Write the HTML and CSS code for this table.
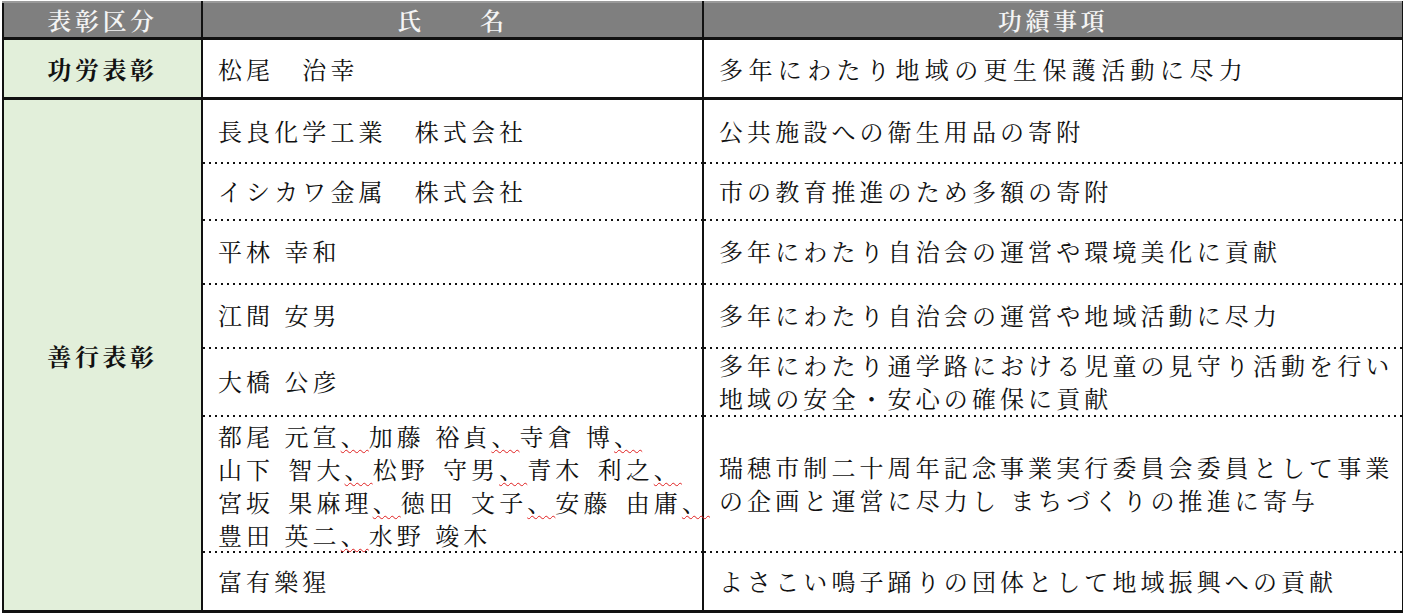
FILE: index.html
```html
<!DOCTYPE html>
<html lang="ja">
<head>
<meta charset="utf-8">
<title>表彰一覧</title>
<link rel="stylesheet" href="styles.css">
</head>
<body>
<div class="wrap">
<table class="awards">
  <colgroup>
    <col class="c-kind">
    <col class="c-name">
    <col class="c-deed">
  </colgroup>
  <thead>
    <tr class="head">
      <th>表彰区分</th>
      <th>氏　　名</th>
      <th>功績事項</th>
    </tr>
  </thead>
  <tbody class="grp">
    <tr class="r-a">
      <td class="kind">功労表彰</td>
      <td class="name">松尾　治幸</td>
      <td class="deed loose">多年にわたり地域の更生保護活動に尽力</td>
    </tr>
  </tbody>
  <tbody class="grp">
    <tr class="r-b">
      <td class="kind" rowspan="7">善行表彰</td>
      <td class="name">長良化学工業　株式会社</td>
      <td class="deed">公共施設への衛生用品の寄附</td>
    </tr>
    <tr class="r-c dot">
      <td class="name">イシカワ金属　株式会社</td>
      <td class="deed">市の教育推進のため多額の寄附</td>
    </tr>
    <tr class="r-d dot">
      <td class="name">平林 幸和</td>
      <td class="deed">多年にわたり自治会の運営や環境美化に貢献</td>
    </tr>
    <tr class="r-d dot">
      <td class="name">江間 安男</td>
      <td class="deed">多年にわたり自治会の運営や地域活動に尽力</td>
    </tr>
    <tr class="r-e dot">
      <td class="name">大橋 公彦</td>
      <td class="deed">多年にわたり通学路における児童の見守り活動を行い<br>地域の安全・安心の確保に貢献</td>
    </tr>
    <tr class="r-f dot">
      <td class="name multi">都尾 元宣<span class="sp">、</span>加藤 裕貞<span class="sp">、</span>寺倉 博<span class="sp">、</span><br>山下<span class="gap">　</span>智大<span class="sp">、</span>松野<span class="gap">　</span>守男<span class="sp">、</span>青木<span class="gap">　</span>利之<span class="sp">、</span><br>宮坂<span class="gap">　</span>果麻理<span class="sp">、</span>徳田<span class="gap">　</span>文子<span class="sp">、</span>安藤<span class="gap">　</span>由庸<span class="sp">、</span><br>豊田 英二<span class="sp">、</span>水野 竣木</td>
      <td class="deed">瑞穂市制二十周年記念事業実行委員会委員として事業<br>の企画と運営に尽力し まちづくりの推進に寄与</td>
    </tr>
    <tr class="r-g dot">
      <td class="name">富有樂猩</td>
      <td class="deed">よさこい鳴子踊りの団体として地域振興への貢献</td>
    </tr>
  </tbody>
</table>
</div>
</body>
</html>
```
FILE: styles.css
```css
html, body {
  margin: 0;
  padding: 0;
  background: #ffffff;
}

.wrap {
  padding: 1px 0 0 2px;
}

.awards {
  border-collapse: collapse;
  table-layout: fixed;
  width: 1400px;
  font-family: "Noto Serif CJK JP", "Noto Sans CJK JP", serif;
  font-size: 24px;
  letter-spacing: 4.1px;
  color: #111111;
}

.c-kind { width: 199px; }
.c-name { width: 501px; }
.c-deed { width: 700px; }

.head th {
  height: 34px;
  padding: 0;
  background: #7f7f7f;
  color: #f4f4f4;
  font-weight: 600;
  font-size: 24px;
  letter-spacing: 3.6px;
  line-height: 30px;
  border-top: 2px solid #9a9a9a;
  border-left: 2px solid #111111;
  border-right: 2px solid #111111;
  border-bottom: 3px solid #111111;
  text-align: center;
}

.awards td {
  padding: 0 0 0 15px;
  border-left: 2px solid #111111;
  border-right: 2px solid #111111;
  line-height: 33px;
  vertical-align: middle;
  white-space: nowrap;
  overflow: visible;
}

.grp {
  border-bottom: 3px solid #111111;
}

.awards td.kind {
  background: #e2efda;
  text-align: center;
  font-weight: 700;
  letter-spacing: 3.6px;
  padding: 0;
}

.awards td.loose {
  letter-spacing: 5.4px;
}

.r-a { height: 60px; }
.r-b { height: 63px; }
.r-c { height: 57px; }
.r-d { height: 64px; }
.r-e { height: 68px; }
.r-f { height: 136px; }
.r-g { height: 61px; }

.dot td.name,
.dot td.deed {
  background-image: linear-gradient(90deg, #111111 0 2px, transparent 2px 6px);
  background-size: 6px 2px;
  background-repeat: repeat-x;
  background-position: 0 0;
}

.awards td.multi {
  line-height: 33px;
  padding-top: 4px;
}

.gap {
  font-size: 10px;
  line-height: 0;
}

.sp {
  text-decoration: underline wavy #e02020;
  text-decoration-thickness: 1px;
  text-underline-offset: 3px;
}
```
